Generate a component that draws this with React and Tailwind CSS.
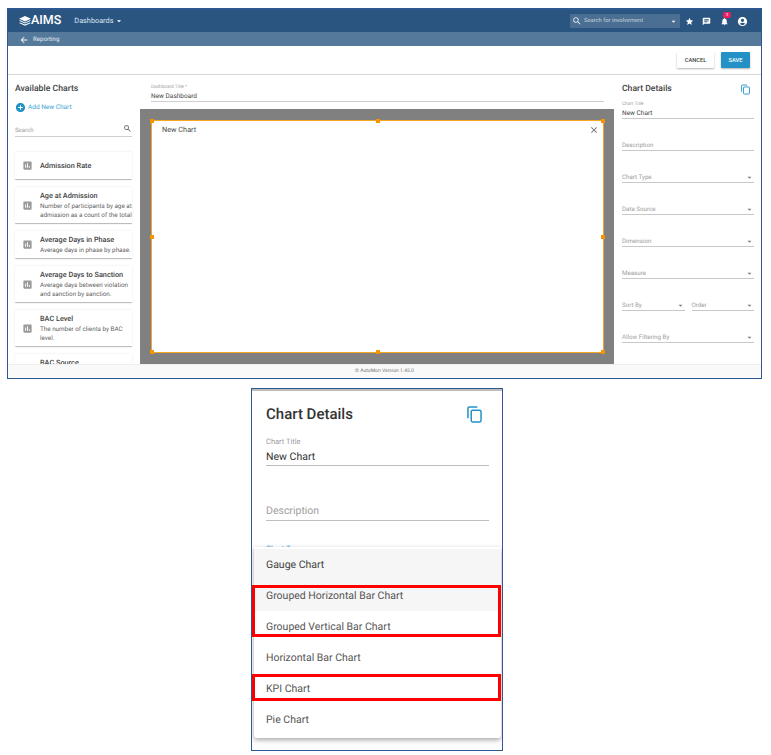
import React from 'react';
import { MdAddCircle, MdArrowBack, MdArrowDropDown, MdAssessment, MdAccountCircle, MdChat, MdClose, MdNotifications, MdSearch, MdStar } from 'react-icons/md';

const charts = [
  { title: 'Admission Rate', h: 'h-[28px]' },
  { title: 'Age at Admission', desc: 'Number of participants by age at admission as a count of the total', h: 'h-[37px]' },
  { title: 'Average Days in Phase', desc: 'Average days in phase by phase.', h: 'h-[28px]' },
  { title: 'Average Days to Sanction', desc: 'Average days between violation and sanction by sanction.', h: 'h-[37px]' },
  { title: 'BAC Level', desc: 'The number of clients by BAC level.', h: 'h-[37px]' },
  { title: 'BAC Source', desc: 'The number of clients by BAC source.', h: 'h-[37px]' },
];

function Logo() {
  return (
    <div className="flex items-center">
      <svg width="12" height="11" viewBox="0 0 13 12" fill="#fff">
        <path d="M6.5 0 13 3 6.5 6 0 3z" />
        <path d="M1.2 4.6 6.5 7 11.8 4.6 13 5.3 6.5 8.3 0 5.3z" />
        <path d="M1.2 7 6.5 9.3 11.8 7 13 7.7 6.5 10.7 0 7.7z" />
      </svg>
      <span className="text-[12.5px] leading-none font-medium text-white">AIMS</span>
    </div>
  );
}

function CopyIcon({ className }) {
  return (
    <svg className={className} viewBox="0 0 16 18" fill="none" stroke="#2391c5" strokeWidth="1.6">
      <path d="M1 13V2.5A1.5 1.5 0 0 1 2.5 1H11" />
      <rect x="4.5" y="4.5" width="10.5" height="12.5" rx="1.5" />
    </svg>
  );
}

function Handle({ className }) {
  return <span className={`absolute w-[4px] h-[4px] bg-[#f59300] ${className}`} />;
}

function ChartCard({ chart }) {
  return (
    <div className={`${chart.h} shrink-0 flex items-center bg-white rounded-[1px] border-b border-[#bdbdbd] shadow-[0_0_2px_rgba(0,0,0,0.12)]`}>
      <MdAssessment className="ml-[7px] shrink-0 text-[#9a9a9a]" size={11} />
      <div className="ml-[7px] min-w-0">
        <div className="text-[7.3px] leading-[10px] font-medium text-[#424242]">{chart.title}</div>
        {chart.desc && <div className="mt-[1px] text-[6.3px] leading-[8.4px] text-[#5f5f5f]">{chart.desc}</div>}
      </div>
    </div>
  );
}

function SelectField({ label, className = '' }) {
  return (
    <div className={`flex items-center justify-between h-[11px] border-b border-[#c8c8c8] ${className}`}>
      <span className="text-[6.2px] leading-none text-[#9e9e9e]">{label}</span>
      <MdArrowDropDown className="text-[#757575]" size={9} />
    </div>
  );
}

function MenuItem({ label, className = '' }) {
  return <div className={`h-[31px] flex items-center pl-[12px] text-[10.5px] text-[#555] ${className}`}>{label}</div>;
}

export default function App() {
  return (
    <div className="w-[771px] h-[755px] bg-white overflow-hidden font-['Roboto',sans-serif] [text-rendering:geometricPrecision]">
      {/* main app screen */}
      <div className="ml-[7px] mt-[8px] w-[755px] h-[371px] border-x border-b border-t-2 border-[#2d5890] flex flex-col bg-white">
        <header className="h-[22px] shrink-0 bg-[#2a5580] flex items-center pl-[11px] pr-[13px] text-white">
          <Logo />
          <span className="ml-[13px] text-[7.3px] text-[#dfe7ef]">Dashboards</span>
          <MdArrowDropDown className="ml-[1px]" size={10} />
          <div className="ml-auto flex items-center w-[110px] h-[14px] rounded-[1px] bg-[#4b6f93] px-[2px]">
            <MdSearch size={10} className="text-[#e6ecf2]" />
            <span className="ml-[2px] text-[5.8px] text-[#c3d0dc]">Search for involvement</span>
            <MdArrowDropDown size={9} className="ml-auto text-white" />
          </div>
          <MdStar size={9} className="ml-[5px]" />
          <MdChat size={9} className="ml-[8px]" />
          <div className="relative ml-[9px]">
            <MdNotifications size={9} />
            <span className="absolute -top-[5px] left-[3px] w-[8px] h-[6px] rounded-[2px] bg-[#e91e63] text-[4px] leading-[6px] text-center">3</span>
          </div>
          <MdAccountCircle size={11} className="ml-[8px]" />
        </header>

        <div className="h-[14px] shrink-0 bg-[#55799b] flex items-center pl-[11px] pt-[1px] text-[#e4ebf1]">
          <MdArrowBack size={10} className="text-white" />
          <span className="ml-[4px] text-[6.1px]">Reporting</span>
        </div>

        <div className="h-[29px] shrink-0 bg-white border-b border-[#d6d6d6] flex items-center justify-end gap-[7px] pr-[11px]">
          <button className="w-[37px] h-[16px] bg-white rounded-[1px] shadow-[0_1px_2px_rgba(0,0,0,0.3)] text-[5.7px] font-medium text-[#424242]">CANCEL</button>
          <button className="w-[29px] h-[16px] bg-[#2391c5] rounded-[1px] shadow-[0_1px_2px_rgba(0,0,0,0.3)] text-[5.7px] font-medium text-white">SAVE</button>
        </div>

        <div className="flex-1 min-h-0 flex">
          {/* available charts */}
          <aside className="w-[132px] shrink-0 flex flex-col overflow-hidden pl-[7px] pr-[8px]">
            <h2 className="mt-[9px] text-[8.7px] leading-[11px] font-medium text-[#424242]">Available Charts</h2>
            <div className="mt-[7px] flex items-center text-[#2391c5]">
              <MdAddCircle size={11} />
              <span className="ml-[2px] text-[6.5px] text-[#39a3d3]">Add New Chart</span>
            </div>
            <div className="mt-[11px] h-[13px] shrink-0 flex items-center justify-between border-b border-[#cfcfcf]">
              <span className="text-[6px] text-[#9e9e9e]">Search</span>
              <MdSearch size={9} className="text-[#555] -translate-y-[2px]" />
            </div>
            <div className="mt-[15px] flex flex-col gap-[7px]">
              {charts.map(c => <ChartCard key={c.title} chart={c} />)}
            </div>
          </aside>

          {/* canvas */}
          <main className="flex-1 min-w-0 flex flex-col">
            <div className="h-[34px] shrink-0 pl-[11px] pr-[10px] pt-[9px]">
              <div className="border-b border-[#cfcfcf]">
                <div className="text-[4.7px] leading-[7px] text-[#9e9e9e]">Dashboard Title *</div>
                <div className="mt-[1px] text-[6.5px] leading-[9px] text-[#424242]">New Dashboard</div>
              </div>
            </div>
            <div className="flex-1 min-h-0 bg-[#808080] pl-[11px] pr-[10px] pt-[11px] pb-[11px]">
              <div className="relative h-full bg-white border border-[#f5a623]">
                <span className="absolute left-[10px] top-[4px] text-[7.3px] text-[#4a4a4a]">New Chart</span>
                <MdClose size={10} className="absolute right-[4px] top-[4px] text-[#666]" />
                <Handle className="-left-[2px] -top-[2px]" />
                <Handle className="left-1/2 -translate-x-1/2 -top-[2px]" />
                <Handle className="-right-[2px] -top-[2px]" />
                <Handle className="-left-[2px] top-1/2 -translate-y-1/2" />
                <Handle className="-right-[2px] top-1/2 -translate-y-1/2" />
                <Handle className="-left-[2px] -bottom-[2px]" />
                <Handle className="left-1/2 -translate-x-1/2 -bottom-[2px]" />
                <Handle className="-right-[2px] -bottom-[2px]" />
              </div>
            </div>
          </main>

          {/* chart details */}
          <aside className="w-[147px] shrink-0 pl-[8px] pr-[7px]">
            <div className="mt-[9px] flex items-center justify-between">
              <h2 className="text-[8.6px] leading-[11px] font-medium text-[#424242]">Chart Details</h2>
              <CopyIcon className="w-[9px] h-[11px] mr-[4px]" />
            </div>
            <div className="mt-[6px] border-b border-[#c8c8c8]">
              <div className="text-[4.7px] leading-[7px] text-[#9e9e9e]">Chart Title</div>
              <div className="mt-[1px] text-[6.5px] leading-[9px] text-[#424242]">New Chart</div>
            </div>
            <div className="mt-[21px] flex flex-col gap-[21px]">
              <div className="h-[11px] flex items-center border-b border-[#c8c8c8]">
                <span className="text-[6.2px] leading-none text-[#9e9e9e]">Description</span>
              </div>
              <SelectField label="Chart Type" />
              <SelectField label="Data Source" />
              <SelectField label="Dimension" />
              <SelectField label="Measure" />
              <div className="flex gap-[7px]">
                <SelectField label="Sort By" className="flex-1" />
                <SelectField label="Order" className="flex-1" />
              </div>
              <SelectField label="Allow Filtering By" />
            </div>
          </aside>
        </div>

        <footer className="h-[14px] shrink-0 bg-[#f9f9f9] border-t border-[#eeeeee] flex items-center justify-center text-[5px] text-[#777]">
          © AutoMon Version 1.45.0
        </footer>
      </div>

      {/* detail of the chart type dropdown */}
      <div className="ml-[251px] mt-[9px] w-[252px] h-[363px] border border-[#2d5890] bg-white overflow-hidden flex flex-col">
        <div className="h-[2px] shrink-0 bg-[#bdbdbd]" />
        <div className="h-[156px] shrink-0 px-[14px] overflow-hidden">
          <div className="mt-[13px] flex items-center justify-between w-[223px]">
            <h2 className="text-[15px] leading-[20px] font-medium text-[#333]">Chart Details</h2>
            <CopyIcon className="w-[15px] h-[17px] mr-[7px]" />
          </div>
          <div className="mt-[12px] w-[223px] border-b border-[#bdbdbd] pb-[1px]">
            <div className="text-[7.5px] leading-[11px] text-[#9e9e9e]">Chart Title</div>
            <div className="mt-[2px] text-[10.5px] leading-[15px] text-[#333]">New Chart</div>
          </div>
          <div className="mt-[37px] w-[223px] border-b border-[#bdbdbd] pb-[2px] text-[10.5px] leading-[15px] text-[#9e9e9e]">Description</div>
          <div className="mt-[24px] text-[7.5px] leading-[8px] text-[#39a3d3]">Chart Type</div>
        </div>
        <div className="relative ml-[2px] w-[247px] pt-[2px] pb-[3px] bg-white rounded-b-[3px] shadow-[0_2px_5px_rgba(0,0,0,0.35)]">
          <MenuItem label="Gauge Chart" className="bg-[#f6f6f6] !text-[#424242]" />
          <MenuItem label="Grouped Horizontal Bar Chart" className="bg-[#f6f6f6]" />
          <MenuItem label="Grouped Vertical Bar Chart" />
          <MenuItem label="Horizontal Bar Chart" />
          <MenuItem label="KPI Chart" />
          <MenuItem label="Pie Chart" />
          {/* red annotation boxes drawn over the menu */}
          <div className="absolute -left-[2px] top-[38px] w-[249px] h-[52px] border-[3px] border-[#ff0000]" />
          <div className="absolute -left-[2px] top-[127px] w-[249px] h-[27px] border-[3px] border-[#ff0000]" />
        </div>
      </div>
    </div>
  );
}
